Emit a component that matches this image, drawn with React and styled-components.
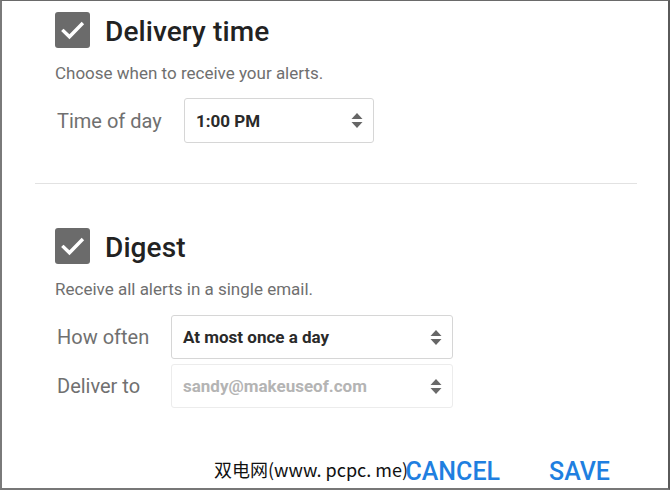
import React from "react";
import styled, { createGlobalStyle } from "styled-components";

const Global = createGlobalStyle`
  html, body { margin: 0; padding: 0; background: #fff; }
  body { font-family: Roboto, "Noto Sans", Arial, sans-serif; }
`;

const Frame = styled.div`
  position: relative;
  width: 670px;
  height: 490px;
  box-sizing: border-box;
  border-top: 1px solid #6a6a6a;
  border-left: 2px solid #7a7a7a;
  border-right: 2px solid #5a5a5a;
  border-bottom: 2px solid #777;
  overflow: hidden;
  background: #fff;
`;

const Content = styled.div`
  padding-left: 53px;
  display: flex;
  flex-direction: column;
`;

const Header = styled.div`
  display: flex;
  align-items: center;
  gap: 15px;
  margin-top: ${(p) => p.$top}px;
  height: 36px;
`;

const Box = styled.div`
  width: 35px;
  height: 36px;
  border-radius: 3px;
  background: #6b6b6b;
  display: flex;
  align-items: center;
  justify-content: center;
`;

const Title = styled.div`
  font-size: 28px;
  font-weight: 500;
  color: #222;
  letter-spacing: 0.1px;
  padding-top: 2px;
`;

const Desc = styled.div`
  margin-top: 15px;
  font-size: 17px;
  line-height: 20px;
  color: #6f6f6f;
`;

const Row = styled.div`
  display: flex;
  align-items: center;
  margin-top: ${(p) => p.$top}px;
`;

const Label = styled.div`
  width: ${(p) => p.$w}px;
  padding-left: 2px;
  box-sizing: border-box;
  font-size: 20px;
  color: #707070;
  flex: none;
`;

const Select = styled.div`
  width: ${(p) => p.$w}px;
  height: ${(p) => p.$h}px;
  box-sizing: border-box;
  border: 1px solid ${(p) => (p.$muted ? "#ececec" : "#d6d6d6")};
  border-radius: 3px;
  display: flex;
  align-items: center;
  justify-content: space-between;
  padding: 0 10px 0 11px;
  font-size: 17px;
  font-weight: 700;
  color: ${(p) => (p.$muted ? "#b4b4b4" : "#2a2a2a")};
`;

const Divider = styled.div`
  margin: 40px 0 0 -20px;
  width: 602px;
  height: 1px;
  background: #e2e2e2;
`;

const Footer = styled.div`
  display: flex;
  justify-content: flex-end;
  gap: 49px;
  padding-right: 58px;
  margin-top: 49px;
`;

const Btn = styled.div`
  font-size: 25px;
  font-weight: 500;
  color: #1f7fe0;
  letter-spacing: 0;
`;

const Watermark = styled.div`
  position: absolute;
  left: 212px;
  top: 455px;
  font-family: "Noto Sans CJK SC", "Liberation Sans", sans-serif;
  font-size: 18px;
  color: #111;
  white-space: nowrap;
`;

const Check = () => (
  <svg width="27" height="27" viewBox="0 0 24 24">
    <path d="M4 12.5 L9.3 17.6 L20.2 6.4" fill="none" stroke="#fff" strokeWidth="3" strokeLinecap="square" />
  </svg>
);

const Arrows = ({ color }) => (
  <svg width="12" height="17" viewBox="0 0 12 17">
    <path d="M6 1 L11.5 7 L0.5 7 Z" fill={color} />
    <path d="M6 16 L11.5 10 L0.5 10 Z" fill={color} />
  </svg>
);

export default function App() {
  return (
    <>
      <Global />
      <Frame>
        <Content>
          <Header $top={11}>
            <Box><Check /></Box>
            <Title>Delivery time</Title>
          </Header>
          <Desc>Choose when to receive your alerts.</Desc>
          <Row $top={15}>
            <Label $w={129}>Time of day</Label>
            <Select $w={190} $h={45}>
              1:00 PM
              <Arrows color="#666" />
            </Select>
          </Row>
          <Divider />
          <Header $top={44}>
            <Box><Check /></Box>
            <Title>Digest</Title>
          </Header>
          <Desc>Receive all alerts in a single email.</Desc>
          <Row $top={16}>
            <Label $w={116}>How often</Label>
            <Select $w={282} $h={44}>
              At most once a day
              <Arrows color="#666" />
            </Select>
          </Row>
          <Row $top={5}>
            <Label $w={116}>Deliver to</Label>
            <Select $w={282} $h={44} $muted>
              sandy@makeuseof.com
              <Arrows color="#6a6a6a" />
            </Select>
          </Row>
          <Footer>
            <Btn>CANCEL</Btn>
            <Btn>SAVE</Btn>
          </Footer>
        </Content>
        <Watermark>双电网(www. pcpc. me)</Watermark>
      </Frame>
    </>
  );
}
